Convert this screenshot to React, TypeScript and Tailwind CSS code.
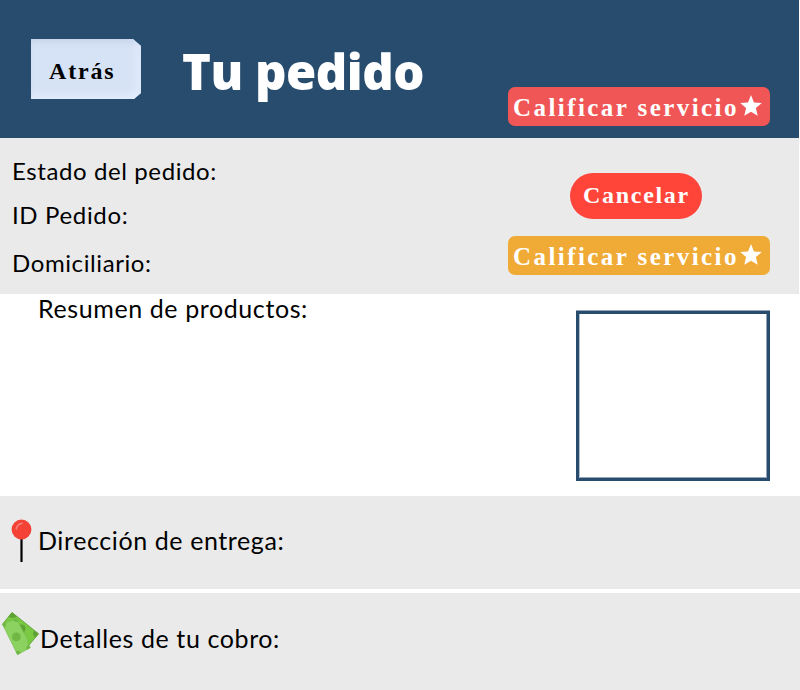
import type { ReactNode } from "react";

const label = "font-['Lato','Noto_Sans',sans-serif] leading-6 text-black whitespace-nowrap";
const serif = "font-['Liberation_Serif',serif] font-bold leading-6 whitespace-nowrap";

function Star() {
  return (
    <svg className="shrink-0" width="22" height="22" viewBox="0 0 22 22" fill="#fff">
      <path d="M11 0 14 7.400 21.800 8 15.900 13.100 17.700 20.800 11 16.700 4.300 20.800 6.100 13.100.2 8 8 7.400Z" />
    </svg>
  );
}

function RateButton({ className }: { className: string }) {
  return (
    <button className={`flex h-[39px] w-[262px] items-start rounded-[7px] pl-[5px] ${className}`}>
      <span className={`${serif} mt-[9px] w-[227px] text-left text-[25px] tracking-[2.43px] text-white`}>
        Calificar servicio
      </span>
      <span className="mt-[8px]"><Star /></span>
    </button>
  );
}

function Pin() {
  return (
    <svg width="22" height="44" viewBox="0 0 22 44">
      <path d="M10.500 19V43" stroke="#000" strokeWidth="2.200" />
      <circle cx="10.500" cy="10.500" r="9.900" fill="#f44336" />
      <path d="M5.300 10Q6 5.200 11 4.200" fill="none" stroke="#f5827a" strokeWidth="1.500" strokeLinecap="round" />
    </svg>
  );
}

function Cash() {
  return (
    <svg width="40" height="46" viewBox="0 0 40 46">
      <path d="M12 2.500 38.500 23.800 29 35 2.500 14.300Z" fill="#7ac943" stroke="#62a839" strokeWidth="1" />
      <path d="M12 2.500 17 6.500Q12 9.500 8.500 6.500Z M38.500 23.800 34.500 20.600Q31 24 35.400 27.500Z" fill="#5fa336" />
      <circle cx="21.500" cy="18.500" r="4" fill="#5fa336" />
      <path d="M2.500 14.300 16.300 8.500 25 25Q28 28 27.500 32L30.300 37.700 17.500 44.700Z" fill="#8bd261" stroke="#74be4b" strokeWidth=".6" />
      <circle cx="16.300" cy="26.800" r="4.400" fill="#70b744" />
      <path d="M2.500 14.300 6 12.800Q6.500 16 4.300 18Z M16.300 8.500 18.300 12Q14.500 12.500 12.500 10Z M30.300 37.700 26.500 39.800Q25.500 36 28.600 34.700Z M17.500 44.700 15.700 41.200Q19 40 20.800 42.800Z" fill="#70b744" />
    </svg>
  );
}

function Strip({ children, className }: { children: ReactNode; className: string }) {
  return <section className={`flex items-start bg-[#eaeaea] ${className}`}>{children}</section>;
}

export default function App() {
  return (
    <main className="flex h-[690px] w-[800px] flex-col overflow-hidden bg-white">
      <header className="mr-px flex h-[138px] items-start bg-[#274c6e] pl-[31px]">
        <button className="mt-[39px] flex h-[60px] w-[110px] items-start bg-[#d6e2f5] pl-[18px] shadow-[inset_0_5px_7px_-3px_#c3d0e7,inset_-6px_-6px_12px_-3px_#e6f0ff] [clip-path:polygon(0_0,102px_0,110px_7px,110px_54px,103px_100%,0_100%)]">
          <span className={`${serif} mt-[20px] text-[24px] tracking-[1.8px] text-black`}>Atrás</span>
        </button>
        <h1 className="mt-[41px] ml-[41px] w-[326px] font-['Open_Sans',sans-serif] text-[49px] leading-[60px] font-extrabold tracking-[-0.5px] whitespace-nowrap text-white">
          Tu pedido
        </h1>
        <div className="mt-[87px]"><RateButton className="bg-[#f05656]" /></div>
      </header>

      <section className="mr-px flex h-[156px] items-start bg-[#eaeaea]">
        <div className="flex w-[508px] flex-col pt-[21px] pl-[12px]">
          <p className={`${label} text-[24px] tracking-[0.6px]`}>Estado del pedido:</p>
          <p className={`${label} mt-[20px] text-[24px] tracking-[0.65px]`}>ID Pedido:</p>
          <p className={`${label} mt-[24px] text-[24px] tracking-[0.6px]`}>Domiciliario:</p>
        </div>
        <div className="flex flex-col pt-[35px]">
          <button className="ml-[62px] flex h-[46px] w-[132px] items-start rounded-full bg-[#ff443a] pl-[13px]">
            <span className={`${serif} mt-[10px] text-[24px] tracking-[1.7px] text-white`}>Cancelar</span>
          </button>
          <div className="mt-[17px]"><RateButton className="bg-[#f0aa36]" /></div>
        </div>
      </section>

      <section className="flex h-[202px] items-start justify-between pr-[30px] pl-[38px]">
        <p className={`${label} mt-[2px] text-[25px] tracking-[0.6px]`}>Resumen de productos:</p>
        <div className="mt-[17px] h-[170px] w-[194px] border-[3px] border-[#274c6e] bg-white shadow-[0_-1px_0_#93a5b6,inset_1px_0_0_#b3c0cc,inset_-1px_-1px_0_#93a5b6]" />
      </section>

      <Strip className="h-[93px]">
        <div className="mt-[23px] ml-[11px] w-[27px]"><Pin /></div>
        <p className={`${label} mt-[32px] text-[25px] tracking-[0.6px]`}>Dirección de entrega:</p>
      </Strip>
      <Strip className="mt-[4px] h-[97px]">
        <div className="mt-[17px] w-[40px]"><Cash /></div>
        <p className={`${label} mt-[33px] text-[25px] tracking-[0.6px]`}>Detalles de tu cobro:</p>
      </Strip>
    </main>
  );
}
